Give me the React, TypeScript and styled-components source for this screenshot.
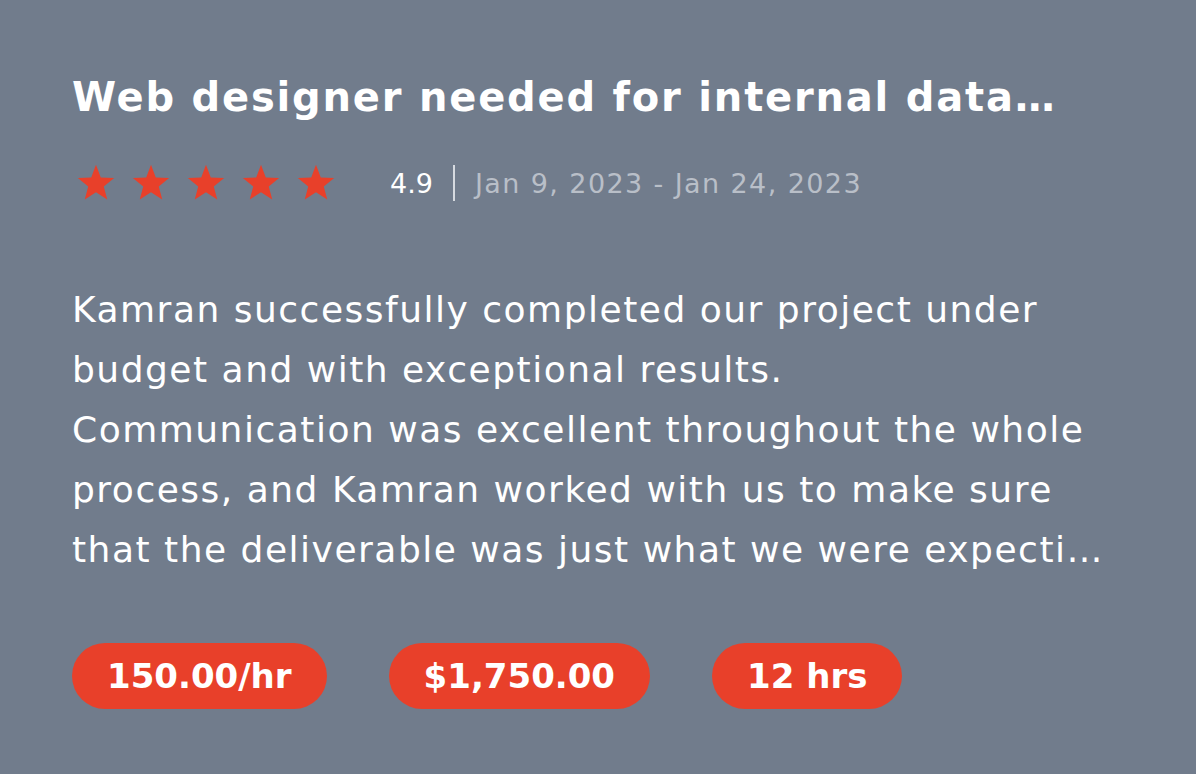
import React from "react";
import styled, { createGlobalStyle } from "styled-components";

const GlobalStyle = createGlobalStyle`
  html, body {
    margin: 0;
    padding: 0;
    background: #717c8c;
  }
  body {
    font-family: "DejaVu Sans", "Open Sans", sans-serif;
  }
`;

const Card = styled.div`
  box-sizing: border-box;
  width: 1196px;
  height: 774px;
  padding: 70px 72px 0 72px;
  background: #717c8c;
  display: flex;
  flex-direction: column;
`;

const Title = styled.h1`
  margin: 0;
  font-size: 40px;
  line-height: 54px;
  font-weight: 700;
  letter-spacing: 1.8px;
  color: #ffffff;
  white-space: nowrap;
  overflow: hidden;
`;

const MetaRow = styled.div`
  display: flex;
  align-items: center;
  margin-top: 39px;
  height: 40px;
`;

const Stars = styled.div`
  display: flex;
  gap: 15px;
  margin-left: 4px;
`;

const Rating = styled.span`
  margin-left: 54px;
  font-size: 27px;
  color: #ffffff;
`;

const Divider = styled.span`
  width: 2px;
  height: 36px;
  background: #d6dae0;
  margin: 0 20px;
`;

const Dates = styled.span`
  font-size: 27px;
  letter-spacing: 1.4px;
  color: #b9bfc8;
`;

const Review = styled.p`
  margin: 77px 0 0 0;
  max-height: 300px;
  font-size: 36px;
  line-height: 60px;
  letter-spacing: 1.5px;
  color: #ffffff;
  white-space: pre-line;
  display: -webkit-box;
  -webkit-line-clamp: 5;
  -webkit-box-orient: vertical;
  overflow: hidden;
`;

const Tags = styled.div`
  display: flex;
  gap: 62px;
  margin-top: 63px;
`;

const Tag = styled.span`
  display: inline-flex;
  align-items: center;
  height: 66px;
  padding: 0 35px;
  border-radius: 33px;
  background: #e8402a;
  color: #ffffff;
  font-size: 34px;
  line-height: 1;
  font-weight: 700;
`;

const Star = () => (
  <svg width="40" height="38" viewBox="0 0 24 23" aria-hidden="true">
    <path
      d="M12 0.5l2.9 7.6 8.1.4-6.3 5.1 2.1 7.9L12 17.1l-6.8 4.4 2.1-7.9L1 8.5l8.1-.4z"
      fill="#e8402a"
    />
  </svg>
);

const review = `Kamran successfully completed our project under budget and with exceptional results.
Communication was excellent throughout the whole process, and Kamran worked with us to make sure that the deliverable was just what we were expecting from the start.`;

export default function App() {
  return (
    <>
      <GlobalStyle />
      <Card>
        <Title>Web designer needed for internal data…</Title>
        <MetaRow>
          <Stars>
            {[0, 1, 2, 3, 4].map((i) => (
              <Star key={i} />
            ))}
          </Stars>
          <Rating>4.9</Rating>
          <Divider />
          <Dates>Jan 9, 2023 - Jan 24, 2023</Dates>
        </MetaRow>
        <Review>{review}</Review>
        <Tags>
          <Tag>150.00/hr</Tag>
          <Tag>$1,750.00</Tag>
          <Tag>12 hrs</Tag>
        </Tags>
      </Card>
    </>
  );
}
